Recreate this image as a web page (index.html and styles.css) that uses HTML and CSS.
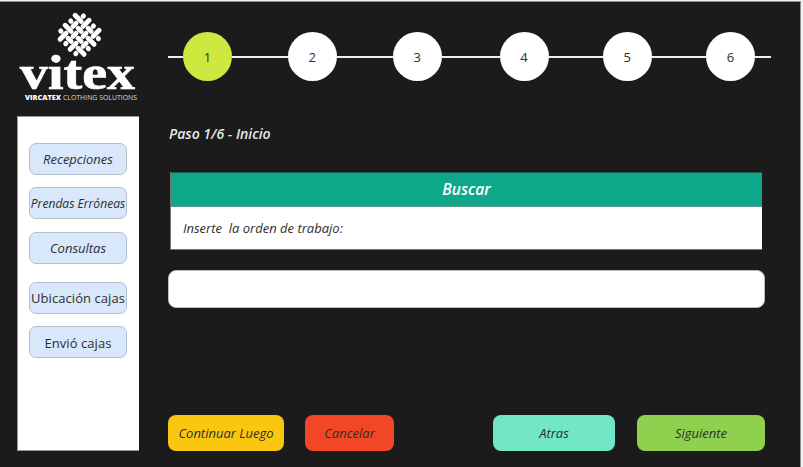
FILE: index.html
```
<!DOCTYPE html>
<html lang="es">
<head>
<meta charset="utf-8">
<title>Vitex - Inicio</title>
<link rel="stylesheet" href="styles.css">
</head>
<body>
<div class="app">
  <aside class="side">
    <svg class="logo" width="130" height="114" viewBox="10 2 130 114" role="img" aria-label="Vitex">
      <g transform="matrix(5 5 5 -5 79.6 34.8)" fill="none" stroke="#fff" stroke-width=".69" stroke-linecap="round">
        <path d="M-2.4 1.5H-1.2M-2.28 .5H-2.22M-2.4 -.5H-1.2M-2.28 -1.5H-2.22M-.8 .5H-.2M-.8 -1.5H-.2M.2 1.5H.8M.2 -.5H.8M1.2 .5H2.4M1.2 -1.5H2.4M2.22 1.5H2.28M2.22 -.5H2.28"/>
        <path d="M-1.5 2.28V2.22M-.5 2.4V1.2M.5 2.28V2.22M1.5 2.4V1.2M-1.5 .8V.2M.5 .8V.2M-.5 -.2V-.8M1.5 -.2V-.8M-1.5 -1.2V-2.4M.5 -1.2V-2.4M-.5 -2.22V-2.28M1.5 -2.22V-2.28"/>
      </g>
      <text class="brand" x="20" y="89" textLength="115" lengthAdjust="spacingAndGlyphs">vitex</text>
      <text class="tagline strong" x="25" y="100" textLength="36" lengthAdjust="spacingAndGlyphs">VIRCATEX</text>
      <text class="tagline" x="63" y="100" textLength="74" lengthAdjust="spacingAndGlyphs">CLOTHING SOLUTIONS</text>
    </svg>
    <nav class="menu">
      <button class="item">Recepciones</button>
      <button class="item tight">Prendas Erróneas</button>
      <button class="item">Consultas</button>
      <button class="item plain first">Ubicación cajas</button>
      <button class="item plain last">Envió cajas</button>
    </nav>
  </aside>
  <main class="main">
    <div class="steps">
      <i class="line end"></i><span class="step active">1</span>
      <i class="line"></i><span class="step">2</span>
      <i class="line"></i><span class="step">3</span>
      <i class="line long"></i><span class="step">4</span>
      <i class="line short"></i><span class="step">5</span>
      <i class="line short"></i><span class="step">6</span>
      <i class="line tail"></i>
    </div>
    <h1 class="title">Paso 1/6 - Inicio</h1>
    <section class="panel">
      <h2 class="panel-head">Buscar</h2>
      <p class="panel-body">Inserte&nbsp; la orden de trabajo:</p>
    </section>
    <input class="field" type="text" aria-label="Orden de trabajo">
    <div class="actions">
      <button class="btn later">Continuar Luego</button>
      <button class="btn cancel">Cancelar</button>
      <button class="btn back">Atras</button>
      <button class="btn next">Siguiente</button>
    </div>
  </main>
</div>
</body>
</html>
```
FILE: styles.css
```
* { box-sizing: border-box; }
body {
  margin: 0;
  width: 803px;
  height: 467px;
  overflow: hidden;
  background: #f2f2f2;
  font-family: "Open Sans", sans-serif;
  font-size: 13px;
  color: #2e2e2e;
}
.app {
  display: flex;
  width: 801px;
  height: 466px;
  margin-top: 1px;
  border-top: 1px solid #8b8e8e;
  border-right: 1px solid #8b8e8e;
  background: #1b1b1b;
}
.side { width: 168px; }
.logo { display: block; margin-left: 10px; }
.brand {
  font: bold 48px "Liberation Serif", serif;
  fill: #fff;
  stroke: #fff;
  stroke-width: .7px;
}
.tagline { font: 6.6px "Open Sans", sans-serif; fill: #ddd; }
.strong { font-weight: 800; fill: #fff; }
.menu {
  display: flex;
  flex-direction: column;
  gap: 12px;
  width: 122px;
  height: 335px;
  margin-left: 17px;
  padding: 26px 12px 0 11px;
  background: #fff;
  border: solid #999;
  border-width: 1px 0 1px 1px;
}
button {
  padding: 0;
  border: 0;
  font: italic 13px "Open Sans", sans-serif;
  color: #2e2e2e;
  white-space: nowrap;
}
.item {
  flex: none;
  display: flex;
  align-items: center;
  justify-content: center;
  width: 98px;
  height: 32px;
  border: 1px solid #b3bfcd;
  border-radius: 7px;
  background: #d8e7fa;
}
.item + .item { margin-top: .4px; }
.tight { font-size: 12.1px; }
.plain { font-style: normal; letter-spacing: .06px; }
.item.first { margin-top: 6.2px; }
.last { padding-top: 2px; }
.main { width: 603px; padding-top: 30px; }
.steps { display: flex; align-items: center; height: 50px; }
.line { width: 56px; height: 2px; background: #eee; }
.line.end { width: 15px; }
.line.long { width: 58px; }
.line.short { width: 54.4px; }
.line.tail { width: 16px; }
.step {
  flex: none;
  width: 49px;
  height: 49px;
  margin-bottom: 1px;
  border-radius: 50%;
  background: #fff;
  text-align: center;
  line-height: 51px;
}
.active { background: #cfe840; }
.title {
  margin: 42px 0 0 1px;
  font-size: 14px;
  font-style: italic;
  font-weight: 600;
  line-height: 20px;
  color: #e8e8e8;
}
.panel {
  width: 592px;
  margin: 28px 0 0 2px;
  border: 1px solid #777;
  border-width: 0 0 1px 1px;
  background: #fff;
}
.panel-head {
  height: 35px;
  margin: 0;
  border-top: 1px solid #17594b;
  border-bottom: 1px solid #5a9e90;
  background: #0ea789;
  color: #fff;
  font-size: 15.6px;
  font-style: italic;
  font-weight: 600;
  line-height: 32px;
  text-align: center;
}
.panel-body { margin: 0; padding-left: 12px; font-style: italic; line-height: 42px; }
.field {
  display: block;
  width: 597px;
  height: 38px;
  margin-top: 20px;
  border: 1px solid #bbb;
  border-radius: 8px;
  background: #fff;
}
.actions { display: flex; margin-top: 107px; }
.btn { height: 36px; border-radius: 8px; }
.later { width: 116px; background: #fac710; }
.cancel { width: 89px; margin-left: 21px; background: #f24726; }
.back { width: 122px; margin-left: 99px; background: #71e7c6; }
.next { width: 128px; margin-left: 22px; background: #8fd14f; }
```
